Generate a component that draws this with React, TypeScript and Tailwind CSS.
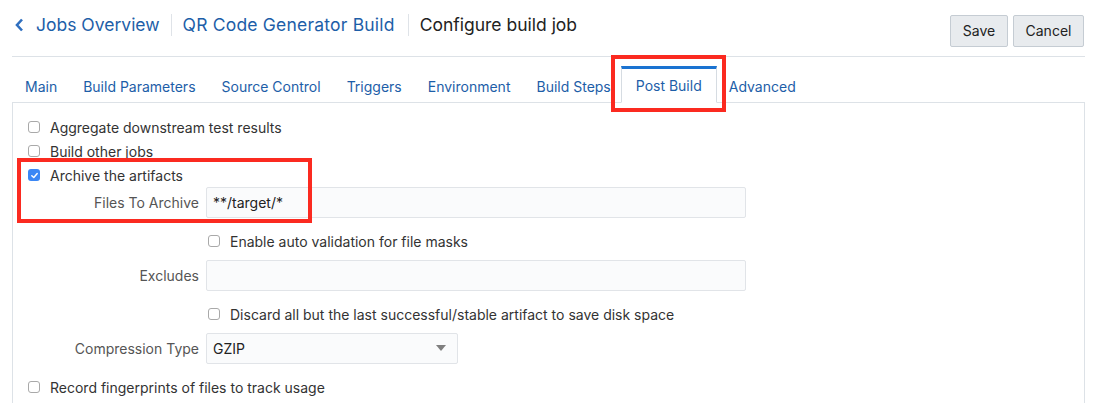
import React from "react";

function Check({ checked = false }: { checked?: boolean }) {
  if (checked) {
    return (
      <span className="inline-flex w-[12px] h-[12px] rounded-[3px] bg-[#3b87f5] items-center justify-center shrink-0">
        <svg width="9" height="9" viewBox="0 0 10 10">
          <path d="M2 5.2 L4.2 7.3 L8 2.8" stroke="white" strokeWidth="1.6" fill="none" strokeLinecap="round" strokeLinejoin="round" />
        </svg>
      </span>
    );
  }
  return <span className="inline-block w-[12px] h-[12px] rounded-[3px] border border-[#a9a9a9] bg-white shrink-0" />;
}

function CheckRow({ label, checked, indent }: { label: string; checked?: boolean; indent?: boolean }) {
  return (
    <div className={`flex items-center h-[24px] gap-[10px] ${indent ? "pl-[195px]" : "pl-[15px]"}`}>
      <Check checked={checked} />
      <span className="text-[14px] text-[#333]">{label}</span>
    </div>
  );
}

function Field({ label, value, select }: { label: string; value?: string; select?: boolean }) {
  return (
    <div className="flex items-center h-[31px]">
      <div className="w-[186px] text-right text-[14px] text-[#555]">{label}</div>
      <div
        className={`ml-[7px] h-[31px] ${select ? "w-[252px]" : "w-[540px]"} border border-[#e1e4e8] rounded-[2px] bg-[#fafbfc] flex items-center px-[6px] text-[14px] text-[#222]`}
      >
        <span className="flex-1">{value}</span>
        {select && (
          <svg width="10" height="7" viewBox="0 0 10 7" className="mr-[5px]">
            <path d="M0 0 H10 L5 6 Z" fill="#7f7f7f" />
          </svg>
        )}
      </div>
    </div>
  );
}

export default function App() {
  const tabs = ["Main", "Build Parameters", "Source Control", "Triggers", "Environment", "Build Steps"];
  return (
    <div className="relative w-[1108px] h-[403px] bg-white overflow-hidden" style={{ fontFamily: "Inter, 'Liberation Sans', sans-serif" }}>
      <div className="mx-[12px] w-[1073px]">
        <div className="flex items-center justify-between h-[57px] border-b border-[#dde2e7]">
          <div className="flex items-center text-[17.5px] pl-[3px] pb-[6px]">
            <svg width="9" height="14" viewBox="0 0 9 14" className="mr-[12px]">
              <path d="M7 1.5 L2 7 L7 12.5" stroke="#2f6fbf" strokeWidth="2.6" fill="none" />
            </svg>
            <span className="text-[#1d5ea8]">Jobs Overview</span>
            <span className="mx-[11px] w-px h-[22px] bg-[#dfe3e8]" />
            <span className="text-[#1d5ea8] tracking-[0.2px]">QR Code Generator Build</span>
            <span className="ml-[13px] mr-[11px] w-px h-[22px] bg-[#dfe3e8]" />
            <span className="text-[#222]">Configure build job</span>
          </div>
          <div className="flex gap-[5px] pt-[5px] pr-[1px]">
            <button className="h-[32px] w-[58px] rounded-[2px] border border-[#c5ccd3] bg-[#e8ebee] text-[14px] text-[#222]">Save</button>
            <button className="h-[32px] w-[71px] rounded-[2px] border border-[#c5ccd3] bg-[#e8ebee] text-[14px] text-[#222]">Cancel</button>
          </div>
        </div>
        <div className="flex items-end h-[45px] text-[14px] text-[#1d5ea8]">
          {tabs.map((t) => (
            <div key={t} className="px-[13px] h-[32px] flex items-center">{t}</div>
          ))}
          <div className="relative -mb-px ml-[-3px] h-[37px] px-[14px] flex items-center border border-[#d6dce2] border-t-[3px] border-t-[#1a73d1] border-b-white bg-white">
            Post Build
          </div>
          <div className="px-[12px] h-[32px] flex items-center">Advanced</div>
        </div>
        <div className="border-t border-l border-r border-[#dde2e7] h-[310px] pt-[12px]">
          <CheckRow label="Aggregate downstream test results" />
          <CheckRow label="Build other jobs" />
          <CheckRow label="Archive the artifacts" checked />
          <Field label="Files To Archive" value="**/target/*" />
          <div className="mt-[11px]">
            <CheckRow label="Enable auto validation for file masks" indent />
          </div>
          <div className="mt-[7px]">
            <Field label="Excludes" />
          </div>
          <div className="mt-[11px]">
            <CheckRow label="Discard all but the last successful/stable artifact to save disk space" indent />
          </div>
          <div className="mt-[7px]">
            <Field label="Compression Type" value="GZIP" select />
          </div>
          <div className="mt-[11px]">
            <CheckRow label="Record fingerprints of files to track usage" />
          </div>
        </div>
      </div>
      <div className="absolute left-[611px] top-[55px] w-[115px] h-[57px] border-[4px] border-[#fb2a20]" />
      <div className="absolute left-[17px] top-[158px] w-[295px] h-[65px] border-[4px] border-[#fb2a20]" />
    </div>
  );
}
